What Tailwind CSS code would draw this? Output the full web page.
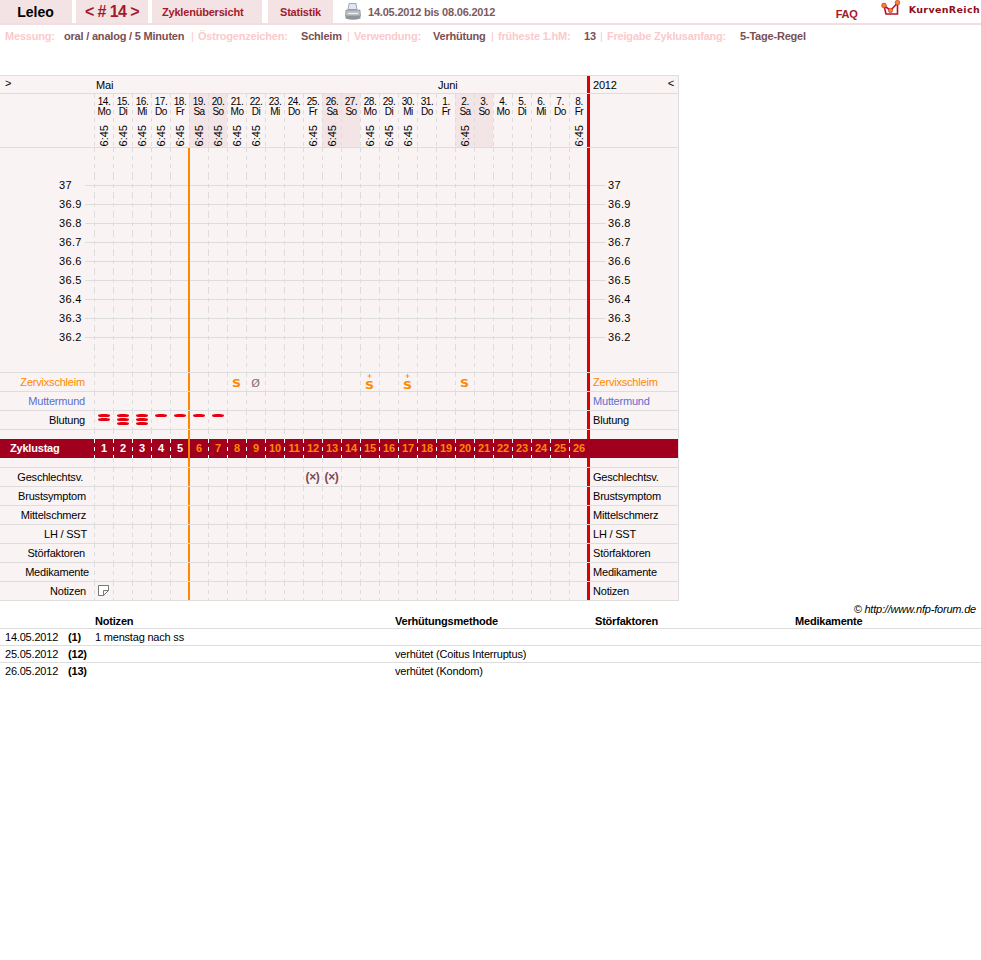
<!DOCTYPE html>
<html lang="de">
<head>
  <meta charset="UTF-8">
  <title>Leleo - Zyklus 14</title>
  <script src="https://cdn.jsdelivr.net/npm/@tailwindcss/browser@4"></script>
</head>
<body class="bg-white font-['Liberation_Sans',Arial,sans-serif] text-[11px] leading-[14px] tracking-[-0.2px] text-black">

  <!-- top navigation -->
  <div class="flex h-[25px] border-b-2 border-[#f3dde0]">
    <div class="w-[72px] pr-px bg-[#f3e3e5] flex items-center justify-center text-[14px] tracking-normal font-bold">Leleo</div>
    <div class="w-[72px] ml-1 bg-[#f3e3e5] flex items-center justify-center text-[16px] tracking-[-0.6px] font-bold text-[#a31a2b]">&lt; # 14 &gt;</div>
    <div class="w-[110px] ml-1 bg-[#f3e3e5] pl-[10px] flex items-center font-bold text-[#a31a2b]">Zyklenübersicht</div>
    <div class="w-[65px] ml-[6px] bg-[#f3e3e5] flex items-center justify-center font-bold text-[#a31a2b]">Statistik</div>
    <svg class="ml-3 mt-[3px]" width="16" height="18" viewBox="0 0 16 18">
      <path d="M4 0.5h7l1 6H3z" fill="#dfe8f2" stroke="#8a98a8" stroke-width="0.8"/>
      <path d="M1 7h14l0.5 6h-15z" fill="#b9bec4" stroke="#7c8288" stroke-width="0.6"/>
      <path d="M0.5 13h15v2.5q-7.5 2.5 -15 0z" fill="#8e9499"/>
      <path d="M3 10.5h10" stroke="#eef0f2" stroke-width="1.2"/>
    </svg>
    <div class="ml-[7px] flex items-center font-bold text-[#7d5a60]">14.05.2012 bis 08.06.2012</div>
    <div class="ml-auto mt-[7px] font-bold text-[#a31a2b]">FAQ</div>
    <svg class="ml-[23px]" width="22" height="18" viewBox="0 0 22 18">
      <path d="M3 5.500l2 8.500h11.500V3L9.500 10.500z" fill="#fff" stroke="#b5122a" stroke-width="1.600"/>
      <circle cx="3" cy="5.500" r="2.400" fill="#f08a1d" stroke="#b5122a" stroke-width="0.500"/>
      <circle cx="9.500" cy="10.500" r="2.200" fill="#f08a1d" stroke="#b5122a" stroke-width="0.500"/>
      <circle cx="16.500" cy="2.700" r="2.400" fill="#f08a1d" stroke="#b5122a" stroke-width="0.500"/>
    </svg>
    <div class="ml-[6px] mr-px mt-[3px] font-['DejaVu_Sans',sans-serif] font-bold text-[9.5px] tracking-[0.35px] text-[#8f0f20]">KurvenReich</div>
  </div>

  <!-- cycle settings -->
  <div class="flex h-[50px] pl-[5px] pt-1 font-bold whitespace-nowrap text-[#7a4f55]">
    <span class="w-[59px] text-[#fcc9cc]">Messung:</span>
    <span class="w-[127px]">oral / analog / 5 Minuten</span>
    <span class="w-[7px] font-normal text-[#fcc9cc]">|</span>
    <span class="w-[103px] text-[#fcc9cc]">Östrogenzeichen:</span>
    <span class="w-[46px]">Schleim</span>
    <span class="w-[7px] font-normal text-[#fcc9cc]">|</span>
    <span class="w-[79px] text-[#fcc9cc]">Verwendung:</span>
    <span class="w-[58px]">Verhütung</span>
    <span class="w-[7px] font-normal text-[#fcc9cc]">|</span>
    <span class="w-[86px] text-[#fcc9cc]">früheste 1.hM:</span>
    <span class="w-[16px]">13</span>
    <span class="w-[7px] font-normal text-[#fcc9cc]">|</span>
    <span class="w-[133px] text-[#fcc9cc]">Freigabe Zyklusanfang:</span>
    <span>5-Tage-Regel</span>
  </div>

  <!-- chart -->
  <div id="chart" class="w-[679px] bg-[#f9f3f3] border-t border-r border-[#dddddd]"></div>

  <!-- notes table -->
  <div class="relative">
    <div class="absolute right-[5px] top-px italic">© http://www.nfp-forum.de</div>
    <div class="grid grid-cols-[68px_27px_300px_200px_200px_1fr] pt-[13px] whitespace-nowrap">
      <div class="h-[15px] border-b border-[#dddddd]"></div>
      <div class="h-[15px] border-b border-[#dddddd]"></div>
      <div class="h-[15px] border-b border-[#dddddd] font-bold">Notizen</div>
      <div class="h-[15px] border-b border-[#dddddd] font-bold">Verhütungsmethode</div>
      <div class="h-[15px] border-b border-[#dddddd] font-bold">Störfaktoren</div>
      <div class="h-[15px] border-b border-[#dddddd] font-bold">Medikamente</div>

      <div class="h-[17px] pt-px pl-[5px] border-b border-[#dddddd]">14.05.2012</div>
      <div class="h-[17px] pt-px border-b border-[#dddddd] font-bold">(1)</div>
      <div class="h-[17px] pt-px border-b border-[#dddddd]">1 menstag nach ss</div>
      <div class="h-[17px] border-b border-[#dddddd]"></div>
      <div class="h-[17px] border-b border-[#dddddd]"></div>
      <div class="h-[17px] border-b border-[#dddddd]"></div>

      <div class="h-[17px] pt-px pl-[5px] border-b border-[#dddddd]">25.05.2012</div>
      <div class="h-[17px] pt-px border-b border-[#dddddd] font-bold">(12)</div>
      <div class="h-[17px] border-b border-[#dddddd]"></div>
      <div class="h-[17px] pt-px border-b border-[#dddddd]">verhütet (Coitus Interruptus)</div>
      <div class="h-[17px] border-b border-[#dddddd]"></div>
      <div class="h-[17px] border-b border-[#dddddd]"></div>

      <div class="h-[17px] pt-px pl-[5px]">26.05.2012</div>
      <div class="h-[17px] pt-px font-bold">(13)</div>
      <div class="h-[17px]"></div>
      <div class="h-[17px] pt-px">verhütet (Kondom)</div>
    </div>
  </div>

  <script>
    const rowGrid = 'relative grid grid-cols-[94px_repeat(26,19px)_90px]';
    const dash = 'relative bg-[linear-gradient(#dddddd_50%,transparent_50%)] bg-[length:1px_8px] bg-repeat-y';
    const dashWhite = 'relative bg-[linear-gradient(#ffffff_50%,transparent_50%)] bg-[length:1px_8px] bg-repeat-y';
    const orangeLine = '<div class="absolute -left-px top-0 bottom-0 w-[2px] bg-[#ff8800]"></div>';
    const redLine = '<div class="absolute -left-px top-0 bottom-0 w-[3px] bg-[#dd0000]"></div>';

    const dates = [['14.','Mo'],['15.','Di'],['16.','Mi'],['17.','Do'],['18.','Fr'],['19.','Sa'],['20.','So'],['21.','Mo'],['22.','Di'],['23.','Mi'],['24.','Do'],['25.','Fr'],['26.','Sa'],['27.','So'],['28.','Mo'],['29.','Di'],['30.','Mi'],['31.','Do'],['1.','Fr'],['2.','Sa'],['3.','So'],['4.','Mo'],['5.','Di'],['6.','Mi'],['7.','Do'],['8.','Fr']];
    const noTime = [9, 10, 13, 17, 18, 20, 21, 22, 23, 24];

    const bar = '<div class="w-[12px] h-[3px] rounded-[4px/1.5px] bg-[#e6000f]"></div>';
    const bleeding = i => {
      const n = [2, 3, 3, 1, 1, 1, 1][i];
      return n ? '<div class="flex flex-col items-center gap-px pt-[3px]">' + bar.repeat(n) + '</div>' : '';
    };
    const mucusS = '<span class="inline-block scale-x-125 font-[\'DejaVu_Sans\',sans-serif] font-bold text-[10px] leading-[10px] text-[#ff8800]">S</span>';
    const plus = '<svg class="mt-px" width="5" height="5" viewBox="0 0 5 5"><path d="M2.500 0v5M0 2.500h5" stroke="#ff8800" stroke-width="1"/></svg>';
    const plusS = '<div class="h-[18px] flex flex-col items-center leading-[10px]">' + plus + '<div class="mt-[2px]">' + mucusS + '</div></div>';
    const oneS = '<div class="h-[18px] flex items-end justify-center leading-[10px] pb-[2px]">' + mucusS + '</div>';
    const mucus = {
      7: oneS,
      8: '<div class="h-[18px] flex items-end justify-center leading-[14px] font-[\'DejaVu_Sans\',sans-serif] text-[11px] text-[#8a6a6a]">Ø</div>',
      14: plusS,
      16: plusS,
      19: oneS
    };
    const sex = '<div class="h-full flex items-center justify-center font-bold text-[12px] text-[#7a4a50] tracking-[-0.4px]">(×)</div>';
    const note = '<svg class="ml-[4px] mt-[3px]" width="11" height="11" viewBox="0 0 11 11"><path d="M0.5 0.500h10v5l-5 5h-5zM10.500 5.500h-5v5" fill="#fff" stroke="#777" stroke-width="1"/></svg>';

    function row(label, labelCls, rightCls, cell, height, border) {
      let html = '<div class="' + rowGrid + ' ' + height + ' ' + border + '">';
      html += '<div class="flex items-center justify-end ' + labelCls + '">' + label + '</div>';
      for (let i = 0; i < 26; i++) {
        html += '<div class="' + dash + '">' + (i === 5 ? orangeLine : '') + (cell ? cell(i) : '') + '</div>';
      }
      html += '<div class="relative flex items-center pl-[5px] ' + rightCls + '">' + redLine + (rightCls.includes('hidden-label') ? '' : label) + '</div></div>';
      return html;
    }

    function tempRow(t) {
      let html = '<div class="' + rowGrid + ' h-[19px]">';
      html += '<div class="absolute left-[85px] w-[503px] top-[9px] h-px bg-[#dddddd]"></div>';
      html += '<div class="absolute left-[590px] w-[16px] top-[9px] h-px bg-[#dddddd]"></div>';
      html += '<div class="pl-[59px] leading-[19px] tracking-[0.35px]">' + t + '</div>';
      for (let i = 0; i < 26; i++) {
        html += '<div class="' + dash + '">' + (i === 5 ? orangeLine : '') + '</div>';
      }
      html += '<div class="relative pl-[20px] leading-[19px] tracking-[0.35px]">' + redLine + t + '</div></div>';
      return html;
    }

    let out = '';

    // month row
    out += '<div class="relative flex h-[18px] border-b border-[#dddddd] leading-[19px]">'
      + '<div class="w-[96px] pl-[5px] -mt-[2px]">&gt;</div><div class="w-[342px]">Mai</div><div class="w-[150px]">Juni</div>'
      + '<div class="relative flex-1 flex justify-between pl-[5px] pr-[4px]">' + redLine + '<span>2012</span><span class="-mt-[2px]">&lt;</span></div></div>';

    // date row
    out += '<div class="' + rowGrid + ' h-[54px] border-b border-[#dddddd]"><div></div>';
    dates.forEach((d, i) => {
      const weekend = d[1] === 'Sa' || d[1] === 'So';
      out += '<div class="' + dash + (weekend ? ' bg-[#f3e4e6]' : '') + ' flex flex-col items-center pl-px pt-[3px] text-[10px] leading-[10px] tracking-[-0.5px]">'
        + '<span>' + d[0] + '</span><span>' + d[1] + '</span>'
        + (noTime.includes(i) ? '' : '<span class="absolute bottom-px left-[5px] [writing-mode:vertical-rl] rotate-180 text-[11px] leading-[11px] tracking-normal">6:45</span>')
        + '</div>';
    });
    out += '<div class="relative">' + redLine + '</div></div>';

    // temperature area
    out += row('', '', 'hidden-label', null, 'h-[28px]', '');
    ['37','36.9','36.8','36.7','36.6','36.5','36.4','36.3','36.2'].forEach(t => out += tempRow(t));
    out += row('', '', 'hidden-label', null, 'h-[26px]', 'border-b border-[#dddddd]');

    const line = 'h-[19px]';
    const b = 'border-b border-[#dddddd]';
    out += row('Zervixschleim', 'pr-[9px] text-[#ff8800]', 'text-[#ff8800]', i => mucus[i] || '', line, b);
    out += row('Muttermund', 'pr-[9px] text-[#5b6fd0]', 'text-[#5b6fd0]', null, line, b);
    out += row('Blutung', 'pr-[9px]', '', bleeding, line, b);
    out += row('', '', 'hidden-label', null, 'h-[9px]', '');

    // cycle day row
    out += '<div class="' + rowGrid + ' h-[19px] bg-[#a0001e] font-bold">'
      + '<div class="pl-[10px] leading-[19px] text-white">Zyklustag</div>';
    for (let i = 0; i < 26; i++) {
      out += '<div class="' + dashWhite + ' pl-px text-center leading-[19px] ' + (i < 5 ? 'text-white' : 'text-[#ff8800]') + '">' + (i === 5 ? orangeLine : '') + (i + 1) + '</div>';
    }
    out += '<div></div></div>';

    out += row('', '', 'hidden-label', null, 'h-[10px]', b);
    out += row('Geschlechtsv.', 'pr-[11px]', '', i => (i === 11 || i === 12) ? sex : '', line, b);
    out += row('Brustsymptom', 'pr-[8px]', '', null, line, b);
    out += row('Mittelschmerz', 'pr-[8px]', '', null, line, b);
    out += row('LH / SST', 'pr-[7px]', '', null, line, b);
    out += row('Störfaktoren', 'pr-[9px]', '', null, line, b);
    out += row('Medikamente', 'pr-[5px]', '', null, line, b);
    out += row('Notizen', 'pr-[8px]', '', i => i === 0 ? note : '', line, b);

    document.getElementById('chart').innerHTML = out;
  </script>
</body>
</html>
